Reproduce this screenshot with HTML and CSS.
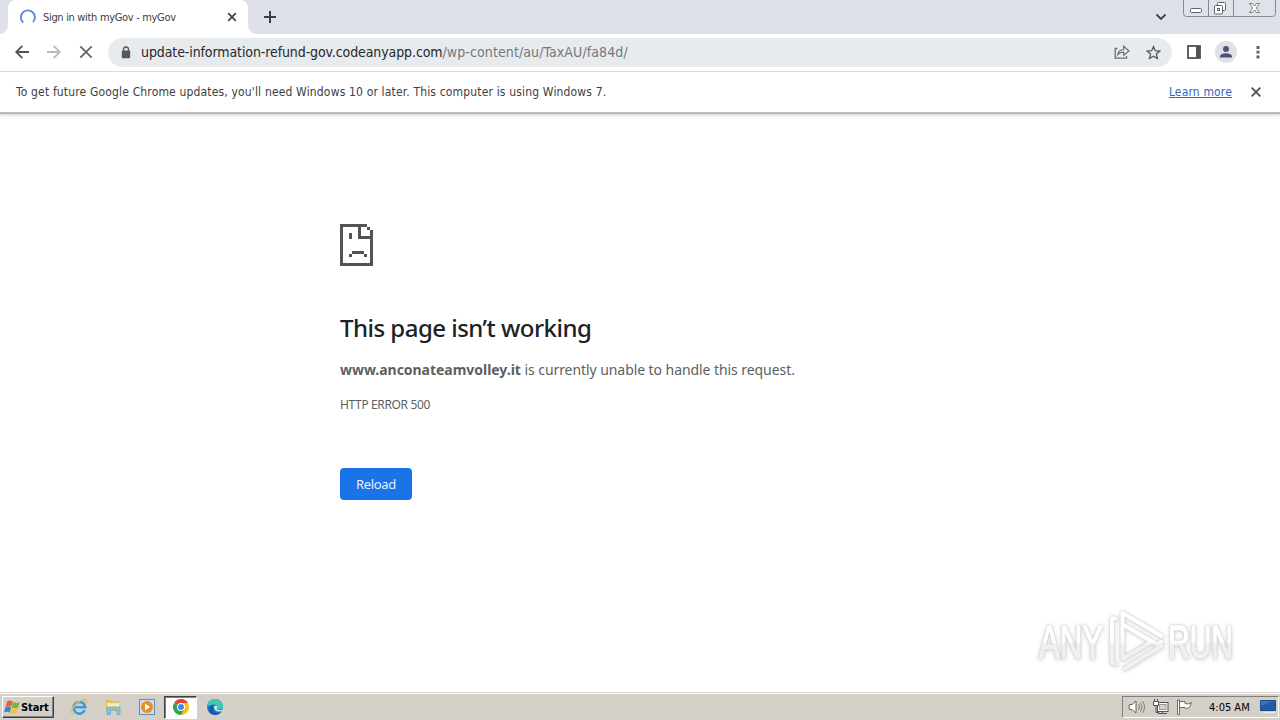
FILE: index.html
```html
<!DOCTYPE html>
<html lang="en">
<head>
<meta charset="utf-8">
<title>Sign in with myGov - myGov</title>
<link rel="stylesheet" href="styles.css">
</head>
<body>
<div class="screen">
  <header class="tabstrip">
    <div class="tab">
      <svg class="spinner" width="16" height="16" viewBox="0 0 16 16"><path d="M3.2 13.6A7 7 0 1 1 13 13.2" fill="none" stroke="#5a8ad8" stroke-width="1.9"/></svg>
      <span class="tab-title">Sign in with myGov - myGov</span>
      <svg class="tab-close" width="10" height="10" viewBox="0 0 10 10"><path d="M1.2 1.2l7.6 7.6M8.8 1.2L1.2 8.8" stroke="#3c4043" stroke-width="1.7"/></svg>
    </div>
    <svg class="new-tab" width="12" height="12" viewBox="0 0 12 12"><path d="M6 0v12M0 6h12" stroke="#3c4043" stroke-width="2"/></svg>
    <svg class="tab-search" width="12" height="8" viewBox="0 0 12 8"><path d="M1.5 1.5L6 6l4.5-4.5" fill="none" stroke="#3c4043" stroke-width="1.8"/></svg>
    <svg class="win-controls" width="93" height="17" viewBox="0 0 93 17">
      <path d="M.5 0v13.5q0 3 3 3h86q3 0 3-3V0" fill="#dfe2e9" stroke="#858990"/>
      <path d="M25.5 0v16M50.500 0v16" stroke="#858990"/>
      <rect x="7.500" y="8.500" width="11" height="4" rx="1" fill="#fff" stroke="#60636a"/>
      <rect x="34.500" y="2.500" width="8" height="8" rx="1" fill="#fff" stroke="#60636a"/>
      <rect x="31.500" y="5.500" width="8" height="8.500" rx="1" fill="#fff" stroke="#60636a"/>
      <rect x="34.500" y="8.500" width="2" height="2" fill="#fff" stroke="#60636a"/>
      <path d="M66.500 3.500h3l2 2.500 2-2.500h3L73.300 8l3.200 4.500h-3l-2-2.500-2 2.500h-3L69.700 8z" fill="#fff" stroke="#6b6e75" stroke-width=".9"/>
    </svg>
  </header>

  <nav class="toolbar">
    <svg class="back" width="14" height="14" viewBox="0 0 14 14"><path d="M14 7H1.500M7.300 .8L1.200 7l6.100 6.200" fill="none" stroke="#505356" stroke-width="1.800"/></svg>
    <svg class="forward" width="14" height="14" viewBox="0 0 14 14"><path d="M0 7h12.500M6.700 .8L12.800 7l-6.100 6.200" fill="none" stroke="#b7babd" stroke-width="1.800"/></svg>
    <svg class="stop" width="14" height="14" viewBox="0 0 14 14"><path d="M1.300 1.300l11.400 11.400M12.700 1.300L1.300 12.700" stroke="#5f6265" stroke-width="1.700"/></svg>
    <div class="omnibox">
      <svg class="lock" width="10" height="13" viewBox="0 0 10 13"><path d="M2.500 5V3.500a2.500 2.500 0 0 1 5 0V5" fill="none" stroke="#55585c" stroke-width="1.300"/><rect x=".8" y="4.600" width="8.400" height="7.600" rx=".8" fill="#55585c"/></svg>
      <span class="url"><span class="url-host">update-information-refund-gov.codeanyapp.com</span><span class="url-path">/wp-content/au/TaxAU/fa84d/</span></span>
      <svg class="share" width="16" height="14" viewBox="0 0 16 14"><path d="M3.500 3.500H1.200v9.700h11.300V11" fill="none" stroke="#6b6e72" stroke-width="1.300"/><path d="M3.800 9.700c.4-3.600 2.600-5 5.900-5.200V1.200L15 6 9.700 10.300V7.200c-2.600 0-4.500.7-5.900 2.500z" fill="none" stroke="#6b6e72" stroke-width="1.200"/></svg>
      <svg class="star" width="15" height="15" viewBox="0 0 15 15"><path d="M7.500 1.500l1.800 4.200 4.500.4-3.400 3 1 4.400-3.900-2.300-3.900 2.300 1-4.400-3.400-3 4.500-.4z" fill="none" stroke="#55585c" stroke-width="1.300"/></svg>
    </div>
    <svg class="panel" width="14" height="14" viewBox="0 0 14 14"><rect x="1" y="1" width="12" height="12" fill="#fff" stroke="#505356" stroke-width="1.800"/><path d="M9 1h4v12H9z" fill="#505356"/></svg>
    <svg class="avatar" width="22" height="22" viewBox="0 0 22 22"><circle cx="11" cy="11" r="11" fill="#dee1e6"/><circle cx="11" cy="8" r="3" fill="#4b5575"/><path d="M5 16.500v-1c0-2 3.500-3.200 6-3.200s6 1.200 6 3.200v1z" fill="#4b5575"/></svg>
    <svg class="kebab" width="4" height="14" viewBox="0 0 4 14"><path d="M.5 1h3v3h-3zM.5 5.800h3v2.800h-3zM.5 10.500h3v3h-3z" fill="#5f6265"/></svg>
  </nav>

  <section class="infobar">
    <span class="notice">To get future Google Chrome updates, you'll need Windows 10 or later. This computer is using Windows 7.</span>
    <a class="learn">Learn more</a>
    <svg class="dismiss" width="10" height="10" viewBox="0 0 10 10"><path d="M.7 .7l8.600 8.600M9.300 .7L.7 9.300" stroke="#4c4f53" stroke-width="1.800"/></svg>
  </section>

  <main class="page">
    <svg class="sad-page" width="33" height="42" viewBox="0 0 11 14" shape-rendering="crispEdges"><path fill="#535353" d="M0 0h9v1H7v3h3V2h1v12H0zM1 1v12h9V5H6V1zM9 1h1v1H9zM3 3h1v2H3zM4 9h4v1H4zM3 10h1v1H3zM8 10h1v1H8z" fill-rule="evenodd"/></svg>
    <h1 class="title">This page isn’t working</h1>
    <p class="message"><strong class="host">www.anconateamvolley.it</strong> <span class="reason">is currently unable to handle this request.</span></p>
    <p class="code">HTTP ERROR 500</p>
    <button class="reload">Reload</button>
    <svg class="watermark" width="210" height="76" viewBox="0 0 210 76">
      <defs>
        <linearGradient id="fade" gradientUnits="userSpaceOnUse" x1="0" y1="0" x2="0" y2="76">
          <stop offset=".52" stop-color="#fff"/><stop offset=".56" stop-color="#f0f0f0"/>
        </linearGradient>
      </defs>
      <g class="mark">
        <text x="9" y="56" textLength="64" lengthAdjust="spacingAndGlyphs">ANY</text>
        <text x="138" y="56" textLength="65" lengthAdjust="spacingAndGlyphs">RUN</text>
        <path class="stroke" d="M85 16.500h-3v44l4 1.500M92.500 57V11L131.500 34M93 22.500L127 42.500L131.500 40M131.500 44L95 66.500M92.500 57L122 39.500"/>
      </g>
    </svg>
  </main>

  <footer class="taskbar">
    <div class="start">
      <svg width="17" height="16" viewBox="0 0 17 16"><path d="M3 2.500q3-2 5.800 0L7.200 7.800Q4.500 6 1.500 7.800z" fill="#e8622a"/><path d="M9.300 2.800q3 2 6.500.3L14.200 8.500q-3 1.500-6.400-.3z" fill="#75b83b"/><path d="M1.300 8.500q3-2 5.800 0l-1.500 5.300Q3 12 0 13.500z" fill="#3c82cf"/><path d="M7.600 9q3 2 6.400.3l-1.500 5.300q-3 1.300-6.300-.5z" fill="#f4c32f"/></svg>
      <span>Start</span>
    </div>
    <div class="launch">
      <svg width="18" height="18" viewBox="0 0 18 18"><path d="M14.800 12a5.800 5.800 0 1 1 .4-2.800H5" fill="none" stroke="#389bd9" stroke-width="2.500"/><path d="M3 16C-1 15 4 6 11 2.500c4-2 6-1.500 5 2" fill="none" stroke="#e6bd4b" stroke-width="1.300"/></svg>
    </div>
    <div class="launch">
      <svg width="18" height="18" viewBox="0 0 18 18"><path d="M2 2h5l1 1.500h7V13H2z" fill="#dfbf58"/><path d="M3 5h12v7H3z" fill="#f8ebae"/><path d="M3 16.500V9h13v7.500h-3V12H6.500v4.500z" fill="#83c3df" stroke="#62a4c6" stroke-width=".7"/></svg>
    </div>
    <div class="launch">
      <svg width="18" height="18" viewBox="0 0 18 18"><rect x="1.500" y="1.500" width="15" height="15" fill="#c7dff0" stroke="#5992c0"/><circle cx="9" cy="9" r="6" fill="#ef8b22"/><path d="M7 5.500L12 9l-5 3.500z" fill="#fff"/></svg>
    </div>
    <div class="launch active">
      <svg width="16" height="16" viewBox="0 0 16 16"><path d="M1.070 4A8 8 0 0 1 14.930 4L8 8z" fill="#e44335"/><path d="M14.930 4A8 8 0 0 1 8 16L8 8V4z" fill="#fbc116"/><path d="M1.070 4A8 8 0 0 0 8 16l3.500-6L8 8z" fill="#34a353"/><circle cx="8" cy="8" r="4" fill="#fff"/><circle cx="8" cy="8" r="3" fill="#4285f4"/></svg>
    </div>
    <div class="launch">
      <svg width="18" height="18" viewBox="0 0 18 18"><circle cx="9" cy="9" r="8" fill="#1c7ec9"/><path d="M1 8C2 2 7 0 11 1.300c4 1.200 6.500 4.700 6 7.700-.5 2.500-4.500 3.200-6.500 2 2-3-1-5-4-4.500C4 7 2 8 1 8z" fill="#42c8ad"/><path d="M7 9c-1 4 3 7 8 5-4 5-12 3-12-2 0-3 2-4.500 4-5z" fill="#155ba5"/><path d="M8 8.500c1-1.500 3.500-1 3 1-.4 1.300-1 1.700 1 2.500 2 .6 4 .2 5-1l-1 2c-4 1.500-8-.5-8-4.500z" fill="#e4eef1"/></svg>
    </div>
    <div class="tray">
      <svg class="sound" width="18" height="16" viewBox="0 0 18 16"><path d="M1.500 5.500H4l4-3.500v12l-4-3.500H1.500q-1-2.500 0-5z" fill="#fff" stroke="#626262"/><path d="M10.500 5q2 3 0 6M12.500 3.500q3 4.500 0 9M14.500 2q4 6 0 12" fill="none" stroke="#808080"/></svg>
      <svg class="network" width="17" height="16" viewBox="0 0 17 16"><rect x="5.500" y="3.500" width="10.500" height="9" fill="#fff" stroke="#555"/><rect x="7.500" y="5.500" width="6.500" height="5" fill="#d4d0c8" stroke="#999"/><path d="M6 14.500h9M10.500 12.500v2" stroke="#555"/><path d="M4 6.500v7h3" fill="none" stroke="#555"/><path d="M1.500 2.500h5v4h-5zM2.500 0v2.500M5.500 0v2.500" fill="#fff" stroke="#555"/></svg>
      <svg class="flag" width="17" height="16" viewBox="0 0 17 16"><path d="M1.500 1h2v14.500h-2zM3.500 2.500H9v2q3 1.500 6.500-1-1 4-3 5.500-2 .8-4.500-.5H3.500z" fill="#fff" stroke="#606060" stroke-width=".9"/></svg>
      <span class="clock">4:05 AM</span>
      <svg class="desktop" width="17" height="14" viewBox="0 0 17 14"><path d="M.5.500h15v10H.5z" fill="#3477c6" stroke="#244d82"/><path d="M1 6q8-4 14-5v9H1z" fill="#235bab"/><path d="M3 12h12v1H3z" fill="#eee"/></svg>
    </div>
  </footer>
</div>
</body>
</html>
```

FILE: styles.css
```css
* { box-sizing: border-box; }
body { margin: 0; background: #fff; font-family: "DejaVu Sans Condensed", "DejaVu Sans", sans-serif; }
svg { display: block; flex: none; }
.screen { width: 1280px; height: 720px; display: flex; flex-direction: column; overflow: hidden; }

.tabstrip { height: 34px; flex: none; background: #dee1e9; display: flex; align-items: flex-start; padding-left: 8px; }
.tab { position: relative; width: 240px; height: 34px; background: #fff; border-radius: 8px 8px 0 0; display: flex; align-items: center; padding: 0 11px 0 12px; }
.tab::before, .tab::after { content: ""; position: absolute; bottom: 0; width: 8px; height: 8px; }
.tab::before { left: -8px; background: radial-gradient(circle at 0 0, transparent 7.5px, #fff 8px); }
.tab::after { right: -8px; background: radial-gradient(circle at 100% 0, transparent 7.5px, #fff 8px); }
.tab-title { margin-left: 7px; font-size: 11px; letter-spacing: -.32px; color: #3c4043; white-space: nowrap; }
.tab-close { margin-left: auto; }
.new-tab { margin: 11px 0 0 16px; }
.tab-search { margin: 13px 16px 0 auto; }
.win-controls { margin-right: 4px; }

.toolbar { height: 38px; flex: none; display: flex; align-items: center; padding: 0 19px 1px 15px; border-bottom: 1px solid #d8dadc; }
.forward, .stop { margin-left: 18px; }
.omnibox { width: 1064px; height: 29px; flex: none; margin-left: 15px; border-radius: 15px; background: #e8ebee; display: flex; align-items: center; padding: 0 11px 0 13px; }
.url { margin-left: 10px; font-size: 14px; white-space: nowrap; }
.url-host { color: #25282c; letter-spacing: -.1px; }
.url-path { color: #73777c; letter-spacing: .1px; }
.share { margin-left: auto; }
.star { margin-left: 16px; }
.panel { margin-left: 15px; }
.avatar { margin-left: 14px; }
.kebab { margin-left: 19px; }

.infobar { position: relative; height: 40px; flex: none; display: flex; align-items: center; padding: 0 19px 0 16px; font-size: 12px; letter-spacing: .163px; color: #3c4043; box-shadow: 0 1px #bdbdbd, 0 2px 1px #b5b5b5, 0 4px 3px #e2e2e2; white-space: nowrap; }
.learn { margin-left: auto; color: #2d69bd; text-decoration: underline; }
.dismiss { margin-left: 19px; }

.page { position: relative; flex: 1; padding: 112px 0 0 340px; font-family: "Noto Sans", sans-serif; color: #5c5f62; }
.title { margin: 45px 0 0; font-size: 24px; font-weight: 500; line-height: 34px; letter-spacing: -.52px; color: #202124; white-space: nowrap; }
.message { margin: 14px 0 0; font-size: 14px; line-height: 22px; white-space: nowrap; }
.host { letter-spacing: -.03px; }
.reason { letter-spacing: -.07px; }
.code { margin: 14px 0 0; font-size: 12px; line-height: 20px; letter-spacing: -.36px; white-space: nowrap; }
.reload { display: block; width: 72px; height: 32px; margin-top: 53px; padding: 0; border: 0; border-radius: 4px; background: #1a73e8; color: #e9f2ff; font: 13px/32px "Noto Sans", sans-serif; letter-spacing: -.3px; text-align: center; }
.watermark { position: absolute; left: 1030px; top: 490px; overflow: visible; filter: drop-shadow(0 0 1px #c4c4c4) drop-shadow(0 1px 2px #ddd); }
.mark text { font: 400 46px "Liberation Sans", sans-serif; fill: url(#fade); stroke: url(#fade); stroke-width: 1.5px; }
.mark .stroke { fill: none; stroke: url(#fade); stroke-width: 4; stroke-linecap: round; stroke-linejoin: round; }

.taskbar { height: 28px; flex: none; border-top: 1px solid #d6d2ca; box-shadow: inset 0 1px #fff; background: #d4d0c8; display: flex; align-items: center; padding: 2px 1px 1px 2px; }
.start { width: 52px; height: 22px; display: flex; align-items: center; gap: 0; padding-left: 1px; border: 1px solid; border-color: #fff #404040 #404040 #fff; box-shadow: inset -1px -1px #808080; font: 700 11px "DejaVu Sans Condensed", sans-serif; letter-spacing: -.1px; color: #000; }
.launch { width: 33px; height: 23px; margin-right: 1px; display: flex; align-items: center; justify-content: center; }
.start + .launch { margin-left: 8px; }
.launch.active { background: #fff; border: 1px solid; border-color: #404040 #fff #fff #404040; box-shadow: inset 1px 1px #808080; }
.tray { width: 157px; height: 22px; margin-left: auto; border: 1px solid; border-color: #808080 #fff #fff #808080; display: flex; align-items: center; padding-left: 5px; }
.network { margin-left: 6px; }
.flag { margin-left: 7px; }
.clock { margin-left: 16px; width: 44px; font-size: 11px; color: #000; white-space: nowrap; }
.desktop { margin-left: 7px; }
```
